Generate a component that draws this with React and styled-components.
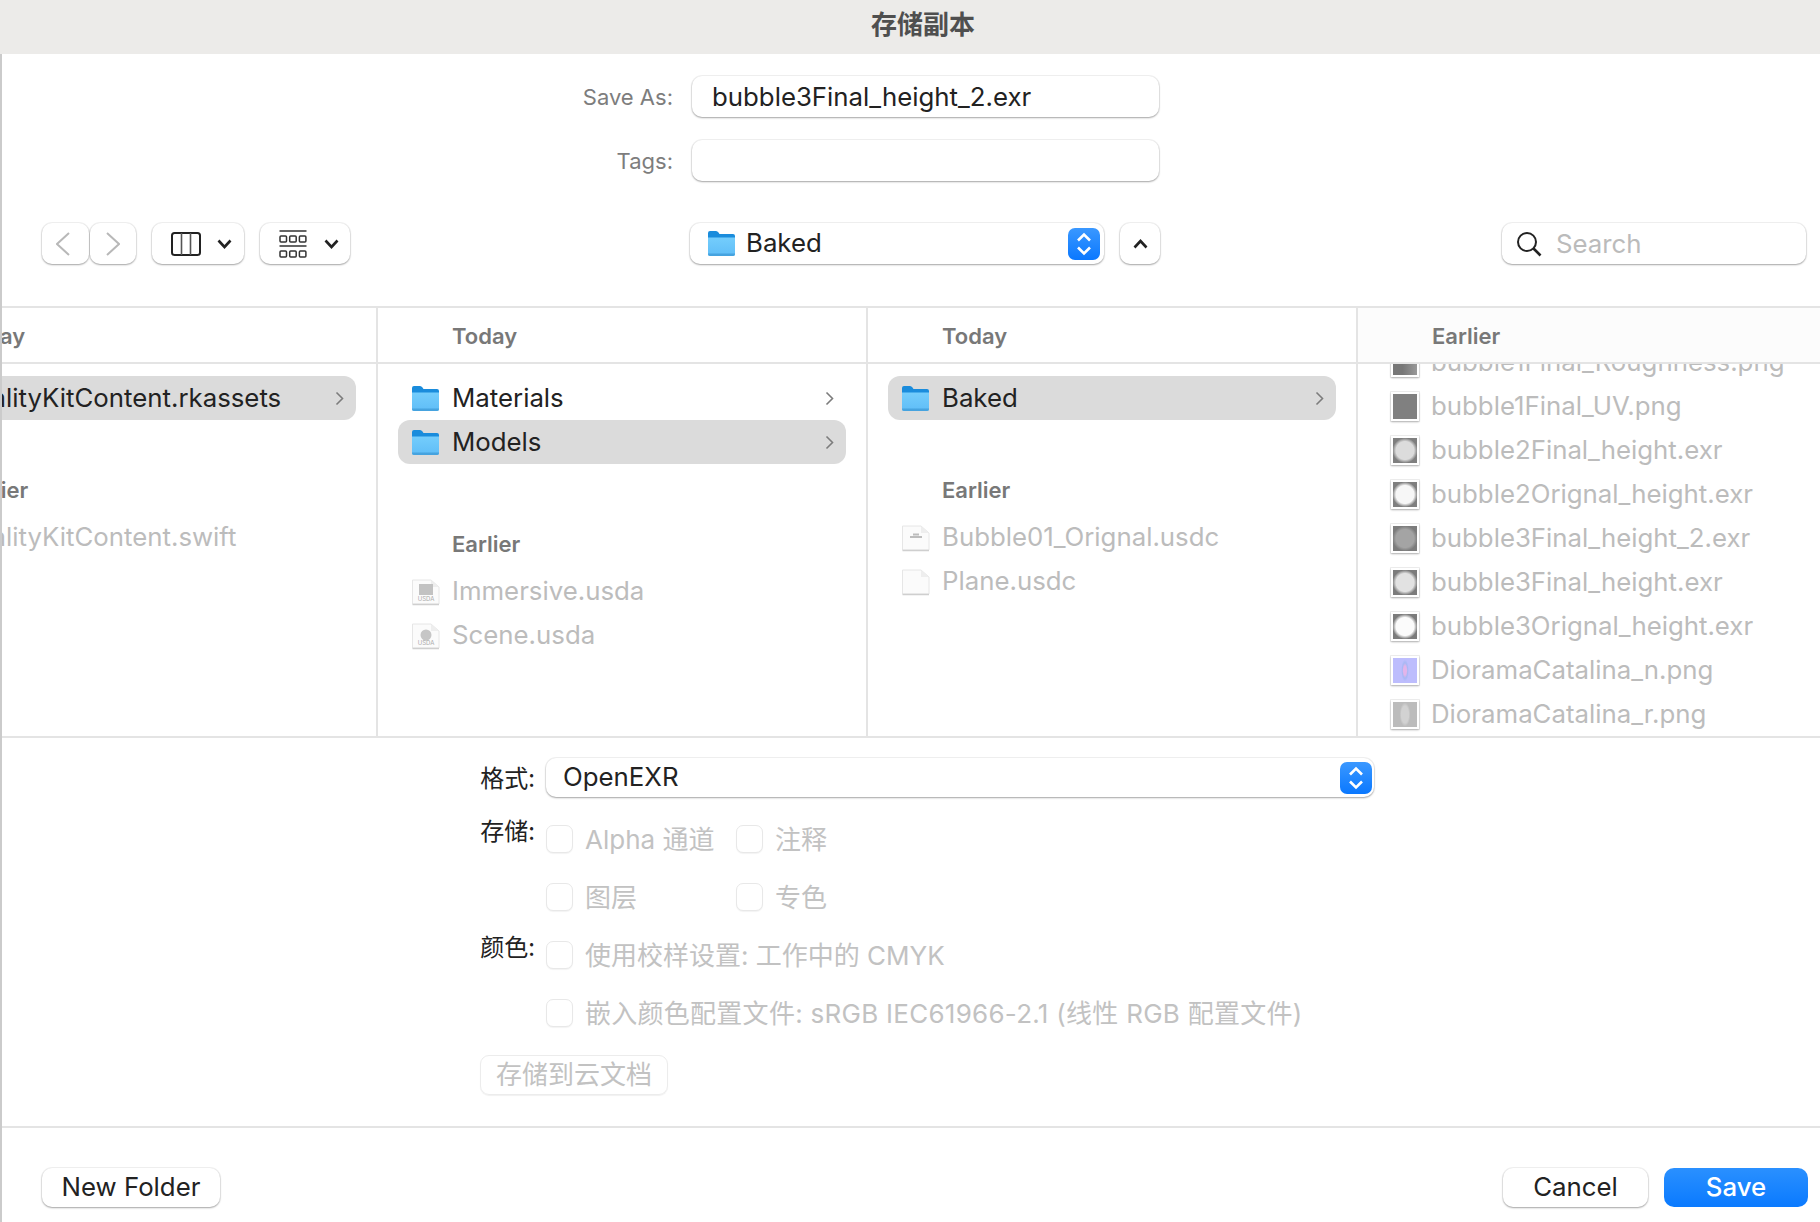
import React from "react";
import styled, { createGlobalStyle } from "styled-components";

const FONT = `"Inter", "Noto Sans CJK SC", sans-serif`;
const CJK = `"Noto Sans CJK SC", sans-serif`;
const RAISED = "0 0 0 1px rgba(0,0,0,0.05), 0 1px 2px rgba(0,0,0,0.32)";

const GlobalStyle = createGlobalStyle`
  html, body {
    margin: 0;
    background: #fff;
    font-family: ${FONT};
  }
  * {
    box-sizing: border-box;
  }
`;

const Window = styled.div`
  width: 1820px;
  height: 1222px;
  display: flex;
  flex-direction: column;
  overflow: hidden;
  color: #222;
  font-size: 25.8px;
`;

const TitleBar = styled.div`
  height: 54px;
  flex: none;
  padding: 0 0 9px 26px;
  display: flex;
  align-items: center;
  justify-content: center;
  background: #ecebe9;
  font-family: ${CJK};
  font-size: 26px;
  font-weight: 700;
  color: #4f4f4f;
`;

const Body = styled.div`
  flex: 1;
  display: flex;
  flex-direction: column;
  min-height: 0;
  border-left: 2px solid #cbcbcb;
`;

const NameSection = styled.div`
  height: 252px;
  flex: none;
  padding-top: 22px;
  display: flex;
  flex-direction: column;
`;

const NameRow = styled.div`
  display: grid;
  grid-template-columns: 671px 467px;
  column-gap: 19px;
  align-items: center;
  height: 41px;
  margin-bottom: 23px;
`;

const NameLabel = styled.label`
  text-align: right;
  font-size: 22px;
  color: #7d7d7d;
`;

const TextField = styled.div`
  height: 41px;
  padding-left: 20px;
  display: flex;
  align-items: center;
  border-radius: 10px;
  background: #fff;
  box-shadow: ${RAISED};
`;

const Toolbar = styled.div`
  height: 41px;
  margin-top: 19px;
  display: flex;
  align-items: center;
  padding-left: 40px;
`;

const ToolButton = styled.div`
  width: ${(p) => p.$w}px;
  height: 41px;
  margin-left: ${(p) => p.$ml || 0}px;
  flex: none;
  display: flex;
  align-items: center;
  justify-content: ${(p) => (p.$start ? "flex-start" : "center")};
  gap: ${(p) => p.$gap || 0}px;
  padding: 0 ${(p) => p.$pr || 0}px 0 ${(p) => p.$start || 0}px;
  border-radius: 10px;
  background: #fff;
  box-shadow: ${RAISED};
`;

const PathPopup = styled.div`
  width: 414px;
  height: 41px;
  margin-left: 340px;
  flex: none;
  display: flex;
  align-items: center;
  gap: 10px;
  padding: 0 4px 0 17px;
  border-radius: 10px;
  background: #fff;
  box-shadow: ${RAISED};
`;

const PopupValue = styled.span`
  flex: 1;
  margin-top: -2px;
`;

const SearchField = styled.div`
  width: 304px;
  height: 41px;
  margin-left: 342px;
  flex: none;
  display: flex;
  align-items: center;
  gap: 14px;
  padding-left: 14px;
  border-radius: 10px;
  background: #fff;
  color: #bbb;
  box-shadow: ${RAISED};
`;

const Browser = styled.div`
  height: 432px;
  flex: none;
  display: flex;
  border-top: 2px solid #e4e4e4;
  border-bottom: 2px solid #e4e4e4;
`;

const Column = styled.div`
  width: ${(p) => p.$w}px;
  flex: none;
  overflow: hidden;
  border-right: ${(p) => (p.$last ? "none" : "2px solid #e4e4e4")};
`;

const ColumnInner = styled.div`
  width: 490px;
  margin-left: ${(p) => p.$shift || 0}px;
`;

const ColumnHeader = styled.div`
  height: 56px;
  padding: 2px 0 0 74px;
  display: flex;
  align-items: center;
  border-bottom: 2px solid #e4e4e4;
  background: ${(p) => (p.$tint ? "#fcfcfc" : "#fff")};
  font-size: 22px;
  font-weight: 600;
  color: #787878;
`;

const RowList = styled.div`
  height: 372px;
  overflow: hidden;
  padding-top: ${(p) => (p.$scrolled ? 0 : 12)}px;
`;

const ScrolledRows = styled.div`
  margin-top: -24px;
`;

const Row = styled.div`
  height: 44px;
  margin: 0 20px;
  padding: 0 12px 0 13px;
  display: flex;
  align-items: center;
  gap: 12px;
  border-radius: 12px;
  white-space: nowrap;
  background: ${(p) => (p.$selected ? "#dbdbdb" : "transparent")};
  color: ${(p) => (p.$dim ? "#bcbcbc" : "#222")};
`;

const RowName = styled.span`
  flex: 1;
  margin-top: -1px;
`;

const SectionLabel = styled.div`
  height: 50px;
  margin-top: ${(p) => p.$mt}px;
  padding-left: 74px;
  display: flex;
  align-items: center;
  font-size: 22px;
  font-weight: 600;
  color: #787878;
`;

const Thumb = styled.div`
  width: 28px;
  height: 29px;
  flex: none;
  border: 2px solid #fff;
  background: ${(p) => p.$fill};
  box-shadow: 0 0 0 1px rgba(0, 0, 0, 0.06), 0 1px 2px rgba(0, 0, 0, 0.28);
`;

const Accessory = styled.div`
  height: 390px;
  flex: none;
  padding: 20px 0 0 475px;
  border-bottom: 2px solid #e4e4e4;
  display: flex;
  flex-direction: column;
`;

const OptionRow = styled.div`
  display: grid;
  grid-template-columns: 58px 1fr;
  column-gap: 11px;
  align-items: ${(p) => (p.$top ? "start" : "center")};
  margin-bottom: ${(p) => p.$mb || 0}px;
`;

const OptionLabel = styled.label`
  font-family: ${CJK};
  font-size: 24px;
  line-height: 28px;
  color: #222;
  text-align: right;
  white-space: nowrap;
  margin-top: ${(p) => (p.$raised ? -9 : -2)}px;
`;

const FormatPopup = styled.div`
  width: 828px;
  height: 39px;
  padding: 0 2px 0 17px;
  display: flex;
  align-items: center;
  border-radius: 10px;
  background: #fff;
  box-shadow: ${RAISED};
`;

const CheckGrid = styled.div`
  display: grid;
  grid-template-columns: 190px auto;
  justify-content: start;
  row-gap: 30px;
  margin-bottom: 30px;
`;

const CheckItem = styled.div`
  height: 28px;
  display: flex;
  align-items: center;
  gap: 12px;
  grid-column: ${(p) => (p.$wide ? "1 / span 2" : "auto")};
  white-space: nowrap;
  font-size: 26px;
  color: #c2c2c2;
`;

const CheckText = styled.span`
  margin-top: -3px;
  letter-spacing: ${(p) => p.$track || 0}px;
`;

const CheckBox = styled.span`
  width: 27px;
  height: 28px;
  flex: none;
  border-radius: 7px;
  border: 1px solid #e8e8e8;
  background: #fff;
  box-shadow: 0 1px 1px rgba(0, 0, 0, 0.05);
`;

const CloudButton = styled.div`
  width: 188px;
  height: 40px;
  margin: -2px 0 0 3px;
  padding-bottom: 5px;
  display: flex;
  align-items: center;
  justify-content: center;
  border-radius: 9px;
  border: 1px solid #ececec;
  box-shadow: 0 1px 1px rgba(0, 0, 0, 0.06);
  font-family: ${CJK};
  font-size: 26px;
  color: #c2c2c2;
`;

const Footer = styled.div`
  flex: 1;
  display: flex;
  align-items: flex-start;
  padding: 40px 12px 0 40px;
`;

const PushButton = styled.div`
  width: ${(p) => p.$w}px;
  height: 39px;
  margin-left: ${(p) => p.$ml || 0}px;
  flex: none;
  display: flex;
  align-items: center;
  justify-content: center;
  padding-bottom: 2px;
  border-radius: 10px;
  background: ${(p) => (p.$primary ? "linear-gradient(#2a90ff, #0a7aff)" : "#fff")};
  color: ${(p) => (p.$primary ? "#fff" : "#222")};
  font-weight: ${(p) => (p.$primary ? 500 : 400)};
  box-shadow: ${(p) => (p.$primary ? "none" : RAISED)};
`;

const FolderIcon = () => (
  <svg width="29" height="27" viewBox="0 0 29 27" style={{ flex: "none" }}>
    <defs>
      <linearGradient id="folderBody" x1="0" y1="0" x2="0" y2="1">
        <stop offset="0" stopColor="#74cdfc" />
        <stop offset="1" stopColor="#5fbdf7" />
      </linearGradient>
    </defs>
    <path d="M1 3 Q1 1 3 1 H9 Q10.5 1 11.5 2.5 L12.5 4 H26 Q28 4 28 6 V12 H1 Z" fill="#1a8cdc" />
    <path d="M1 7.5 H28 V24 Q28 26 26 26 H3 Q1 26 1 24 Z" fill="url(#folderBody)" />
    <path d="M1 23.5 H28 V24 Q28 26 26 26 H3 Q1 26 1 24 Z" fill="#46a3df" />
  </svg>
);

const FileIcon = ({ kind }) => (
  <svg width="29" height="29" viewBox="0 0 29 29" style={{ flex: "none" }}>
    <path d="M1.5 3 H20 L28 10 V27 H1.5 Z" fill="#fbfbfb" stroke="#e6e6e6" strokeWidth="1" />
    <path d="M20 3 V10 H28 Z" fill="#eee" />
    <path d="M1.5 27.5 H28" stroke="#cfcfcf" strokeWidth="1.5" />
    {kind === "usda-box" && <rect x="8" y="7" width="14" height="11" fill="#c2c2c2" />}
    {kind === "usda-ball" && <circle cx="15" cy="14" r="5.5" fill="#c6c6c6" />}
    {kind === "usdc" && <path d="M9 14 H21 M12 11.5 H18" stroke="#bdbdbd" strokeWidth="2" />}
    {(kind === "usda-box" || kind === "usda-ball") && (
      <text x="15" y="24" textAnchor="middle" fontSize="6" fontFamily="Inter, sans-serif" fill="#aaa">
        USDA
      </text>
    )}
  </svg>
);

const RowChevron = () => (
  <svg width="9" height="15" viewBox="0 0 9 15" style={{ flex: "none" }}>
    <path d="M1.5 1.5 L7.5 7.5 L1.5 13.5" fill="none" stroke="#7c7c7c" strokeWidth="1.6" />
  </svg>
);

const Stepper = () => (
  <svg width="32" height="32" viewBox="0 0 32 32" style={{ flex: "none" }}>
    <defs>
      <linearGradient id="stepperFill" x1="0" y1="0" x2="0" y2="1">
        <stop offset="0" stopColor="#3a98ff" />
        <stop offset="1" stopColor="#0a78ff" />
      </linearGradient>
    </defs>
    <rect width="32" height="32" rx="7" fill="url(#stepperFill)" />
    <path d="M10 12.5 L16 6.5 L22 12.5 M10 19.5 L16 25.5 L22 19.5" fill="none" stroke="#fff" strokeWidth="2.6" />
  </svg>
);

const NavChevron = ({ flip }) => (
  <svg width="14" height="24" viewBox="0 0 14 24">
    <path
      d={flip ? "M1 1 L13 12 L1 23" : "M13 1 L1 12 L13 23"}
      fill="none"
      stroke="#b8b8b8"
      strokeWidth="2"
    />
  </svg>
);

const SmallChevron = ({ up }) => (
  <svg width="15" height="10" viewBox="0 0 15 10">
    <path
      d={up ? "M1.5 8.5 L7.5 2 L13.5 8.5" : "M1.5 1.5 L7.5 8 L13.5 1.5"}
      fill="none"
      stroke="#222"
      strokeWidth="2.6"
    />
  </svg>
);

const ColumnsIcon = () => (
  <svg width="30" height="24" viewBox="0 0 30 24">
    <rect x="1" y="1" width="28" height="22" rx="2.5" fill="none" stroke="#222" strokeWidth="2" />
    <path d="M10.5 1 V23 M19.5 1 V23" stroke="#555" strokeWidth="1.6" />
  </svg>
);

const GroupIcon = () => (
  <svg width="28" height="28" viewBox="0 0 28 28">
    <path d="M0.5 1 H27.5 M0.5 16 H27.5" stroke="#333" strokeWidth="1.6" />
    <g fill="none" stroke="#333" strokeWidth="1.5">
      <rect x="1" y="6" width="6.5" height="6" rx="1" />
      <rect x="10.7" y="6" width="6.5" height="6" rx="1" />
      <rect x="20.4" y="6" width="6.5" height="6" rx="1" />
      <rect x="1" y="21" width="6.5" height="6" rx="1" />
      <rect x="10.7" y="21" width="6.5" height="6" rx="1" />
      <rect x="20.4" y="21" width="6.5" height="6" rx="1" />
    </g>
  </svg>
);

const SearchIcon = () => (
  <svg width="26" height="26" viewBox="0 0 26 26" style={{ flex: "none" }}>
    <circle cx="11" cy="11" r="9" fill="none" stroke="#222" strokeWidth="2" />
    <path d="M17.5 17.5 L24.5 24.5" stroke="#222" strokeWidth="2.6" />
  </svg>
);

const disc = (inner, outer) =>
  `radial-gradient(circle at 50% 50%, ${inner} 0, ${inner} 52%, ${outer} 72%, ${outer} 100%)`;

const thumbs = [
  { name: "bubble1Final_Roughness.png", fill: "linear-gradient(90deg, #777 40%, #999)" },
  { name: "bubble1Final_UV.png", fill: "#808080" },
  { name: "bubble2Final_height.exr", fill: disc("#dcdcdc", "#7f7f7f") },
  { name: "bubble2Orignal_height.exr", fill: disc("#f7f7f7", "#7f7f7f") },
  { name: "bubble3Final_height_2.exr", fill: disc("#a4a4a4", "#7c7c7c") },
  { name: "bubble3Final_height.exr", fill: disc("#e2e2e2", "#7c7c7c") },
  { name: "bubble3Orignal_height.exr", fill: disc("#fbfbfb", "#7c7c7c") },
  {
    name: "DioramaCatalina_n.png",
    fill: "radial-gradient(ellipse 16% 44% at 50% 50%, #e3b4ea 40%, #a8b8f4 70%, transparent 100%), #bdbdfd",
  },
  {
    name: "DioramaCatalina_r.png",
    fill: "radial-gradient(ellipse 22% 48% at 50% 50%, #d2d2d2 70%, transparent 100%), #bcbcbc",
  },
];

const App = () => (
  <Window>
    <GlobalStyle />
    <TitleBar>存储副本</TitleBar>
    <Body>
      <NameSection>
        <NameRow>
          <NameLabel>Save As:</NameLabel>
          <TextField>bubble3Final_height_2.exr</TextField>
        </NameRow>
        <NameRow>
          <NameLabel>Tags:</NameLabel>
          <TextField />
        </NameRow>
        <Toolbar>
          <ToolButton $w={47} $pr={5}>
            <NavChevron />
          </ToolButton>
          <ToolButton $w={46} $ml={1}>
            <NavChevron flip />
          </ToolButton>
          <ToolButton $w={92} $ml={16} $gap={16} $start={19}>
            <ColumnsIcon />
            <SmallChevron />
          </ToolButton>
          <ToolButton $w={90} $ml={16} $gap={17} $start={19}>
            <GroupIcon />
            <SmallChevron />
          </ToolButton>
          <PathPopup>
            <FolderIcon />
            <PopupValue>Baked</PopupValue>
            <Stepper />
          </PathPopup>
          <ToolButton $w={40} $ml={16}>
            <SmallChevron up />
          </ToolButton>
          <SearchField>
            <SearchIcon />
            Search
          </SearchField>
        </Toolbar>
      </NameSection>

      <Browser>
        <Column $w={376}>
          <ColumnInner $shift={-116}>
            <ColumnHeader>Today</ColumnHeader>
            <RowList>
              <Row $selected>
                <FolderIcon />
                <RowName>RealityKitContent.rkassets</RowName>
                <RowChevron />
              </Row>
              <SectionLabel $mt={45}>Earlier</SectionLabel>
              <Row $dim>
                <FileIcon kind="plain" />
                <RowName>RealityKitContent.swift</RowName>
              </Row>
            </RowList>
          </ColumnInner>
        </Column>

        <Column $w={490}>
          <ColumnHeader>Today</ColumnHeader>
          <RowList>
            <Row>
              <FolderIcon />
              <RowName>Materials</RowName>
              <RowChevron />
            </Row>
            <Row $selected>
              <FolderIcon />
              <RowName>Models</RowName>
              <RowChevron />
            </Row>
            <SectionLabel $mt={55}>Earlier</SectionLabel>
            <Row $dim>
              <FileIcon kind="usda-box" />
              <RowName>Immersive.usda</RowName>
            </Row>
            <Row $dim>
              <FileIcon kind="usda-ball" />
              <RowName>Scene.usda</RowName>
            </Row>
          </RowList>
        </Column>

        <Column $w={490}>
          <ColumnHeader>Today</ColumnHeader>
          <RowList>
            <Row $selected>
              <FolderIcon />
              <RowName>Baked</RowName>
              <RowChevron />
            </Row>
            <SectionLabel $mt={45}>Earlier</SectionLabel>
            <Row $dim>
              <FileIcon kind="usdc" />
              <RowName>Bubble01_Orignal.usdc</RowName>
            </Row>
            <Row $dim>
              <FileIcon kind="plain" />
              <RowName>Plane.usdc</RowName>
            </Row>
          </RowList>
        </Column>

        <Column $w={462} $last>
          <ColumnHeader $tint>Earlier</ColumnHeader>
          <RowList $scrolled>
            <ScrolledRows>
              {thumbs.map((t) => (
                <Row key={t.name} $dim>
                  <Thumb $fill={t.fill} />
                  <RowName>{t.name}</RowName>
                </Row>
              ))}
            </ScrolledRows>
          </RowList>
        </Column>
      </Browser>

      <Accessory>
        <OptionRow $mb={28}>
          <OptionLabel>格式:</OptionLabel>
          <FormatPopup>
            <PopupValue>OpenEXR</PopupValue>
            <Stepper />
          </FormatPopup>
        </OptionRow>
        <OptionRow $top>
          <OptionLabel $raised>存储:</OptionLabel>
          <CheckGrid>
            <CheckItem>
              <CheckBox />
              <CheckText>Alpha 通道</CheckText>
            </CheckItem>
            <CheckItem>
              <CheckBox />
              <CheckText>注释</CheckText>
            </CheckItem>
            <CheckItem>
              <CheckBox />
              <CheckText>图层</CheckText>
            </CheckItem>
            <CheckItem>
              <CheckBox />
              <CheckText>专色</CheckText>
            </CheckItem>
          </CheckGrid>
        </OptionRow>
        <OptionRow $top>
          <OptionLabel $raised>颜色:</OptionLabel>
          <CheckGrid>
            <CheckItem $wide>
              <CheckBox />
              <CheckText>使用校样设置: 工作中的 CMYK</CheckText>
            </CheckItem>
            <CheckItem $wide>
              <CheckBox />
              <CheckText $track={0.27}>嵌入颜色配置文件: sRGB IEC61966-2.1 (线性 RGB 配置文件)</CheckText>
            </CheckItem>
          </CheckGrid>
        </OptionRow>
        <CloudButton>存储到云文档</CloudButton>
      </Accessory>

      <Footer>
        <PushButton $w={178}>New Folder</PushButton>
        <PushButton $w={145} $ml={1283}>
          Cancel
        </PushButton>
        <PushButton $w={144} $ml={16} $primary>
          Save
        </PushButton>
      </Footer>
    </Body>
  </Window>
);

export default App;
